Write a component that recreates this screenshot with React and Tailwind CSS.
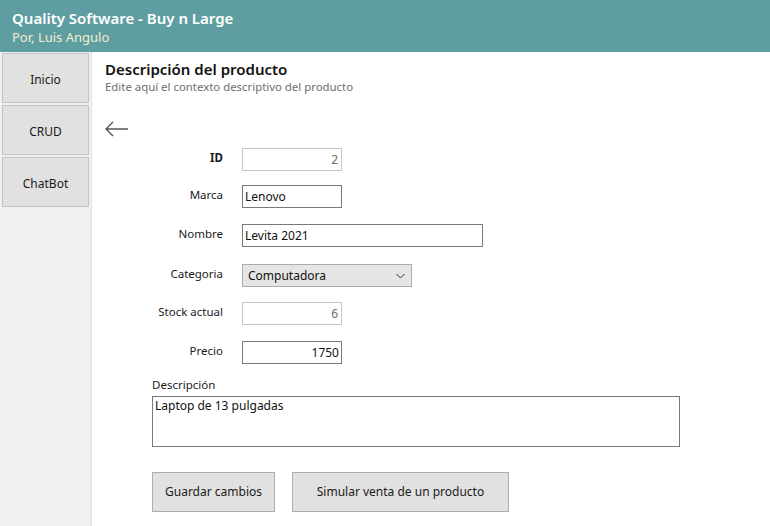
const font = { fontFamily: '"Noto Sans", "Open Sans", sans-serif' }

const Field = ({ label, bold, children, mt }) => (
  <div className={`flex items-center h-[23px] ${mt}`}>
    <div className={`w-[118px] text-right text-[11.5px] text-[#1a1a1a] -mt-[4px] ${bold ? "font-bold" : ""}`}>{label}</div>
    <div className="ml-[19px]">{children}</div>
  </div>
)

const NavButton = ({ children }) => (
  <button className="w-[87px] h-[50px] pt-[3px] bg-[#e1e1e1] border border-[#c4c4c4] text-[12px] text-[#1a1a1a]">
    {children}
  </button>
)

export default function App() {
  return (
    <div className="w-full h-screen flex flex-col bg-white overflow-hidden" style={font}>
      <header className="h-[52px] bg-[#5f9ea0] px-[12px] pt-[7px] shrink-0">
        <div className="text-[15px] font-semibold leading-[22px] text-white">Quality Software - Buy n Large</div>
        <div className="text-[13px] leading-[17px] text-[#f4ecd0]">Por, Luis Angulo</div>
      </header>
      <div className="flex flex-1 min-h-0">
        <aside className="w-[92px] bg-[#f0f0f0] border-r border-[#e3e3e3] flex flex-col gap-[2px] pl-[2px] pt-[1px] shrink-0">
          <NavButton>Inicio</NavButton>
          <NavButton>CRUD</NavButton>
          <NavButton>ChatBot</NavButton>
        </aside>
        <main className="flex-1 pl-[13px] pt-[7px]">
          <h1 className="text-[15px] font-semibold leading-[20px] text-[#111]">Descripción del producto</h1>
          <p className="text-[11.4px] leading-[15px] text-[#6d6d6d]">Edite aquí el contexto descriptivo del producto</p>
          <svg className="mt-[27px] ml-[-1px]" width="26" height="16" viewBox="0 0 26 16" fill="none" stroke="#555" strokeWidth="1.4">
            <path d="M24 8H2M9 1L2 8l7 7" />
          </svg>
          <div>
            <Field label="ID" bold mt="mt-[11px]">
              <div className="w-[100px] h-[23px] border border-[#c6c6c6] text-[12px] text-[#6d6d6d] text-right px-[3px] leading-[21px]">2</div>
            </Field>
            <Field label="Marca" mt="mt-[14px]">
              <div className="w-[100px] h-[23px] border border-[#7a7a7a] text-[12px] text-[#111] px-[2px] leading-[21px]">Lenovo</div>
            </Field>
            <Field label="Nombre" mt="mt-[16px]">
              <div className="w-[241px] h-[23px] border border-[#7a7a7a] text-[12px] text-[#111] px-[2px] leading-[21px]">Levita 2021</div>
            </Field>
            <Field label="Categoria" mt="mt-[17px]">
              <div className="w-[170px] h-[23px] border border-[#adadad] bg-[#e5e5e5] text-[12px] text-[#111] px-[5px] pr-[6px] flex items-center justify-between">
                <span>Computadora</span>
                <svg width="9" height="6" viewBox="0 0 9 6" fill="none" stroke="#333" strokeWidth="1">
                  <path d="M0.5 1l4 4 4-4" />
                </svg>
              </div>
            </Field>
            <Field label="Stock actual" mt="mt-[15px]">
              <div className="w-[100px] h-[23px] border border-[#c6c6c6] text-[12px] text-[#6d6d6d] text-right px-[3px] leading-[21px]">6</div>
            </Field>
            <Field label="Precio" mt="mt-[16px]">
              <div className="w-[100px] h-[23px] border border-[#7a7a7a] text-[12px] text-[#111] text-right px-[2px] leading-[21px]">1750</div>
            </Field>
          </div>
          <div className="ml-[47px] mt-[13px]">
            <div className="text-[11.5px] leading-[16px] text-[#1a1a1a]">Descripción</div>
            <div className="w-[528px] h-[51px] mt-[3px] border border-[#7a7a7a] text-[12px] text-[#111] px-[2px] leading-[18px]">Laptop de 13 pulgadas</div>
            <div className="flex gap-[17px] mt-[25px]">
              <button className="w-[123px] h-[40px] bg-[#e1e1e1] border border-[#adadad] text-[12px] text-[#1a1a1a]">Guardar cambios</button>
              <button className="w-[217px] h-[40px] bg-[#e1e1e1] border border-[#adadad] text-[12px] text-[#1a1a1a]">Simular venta de un producto</button>
            </div>
          </div>
        </main>
      </div>
    </div>
  )
}
